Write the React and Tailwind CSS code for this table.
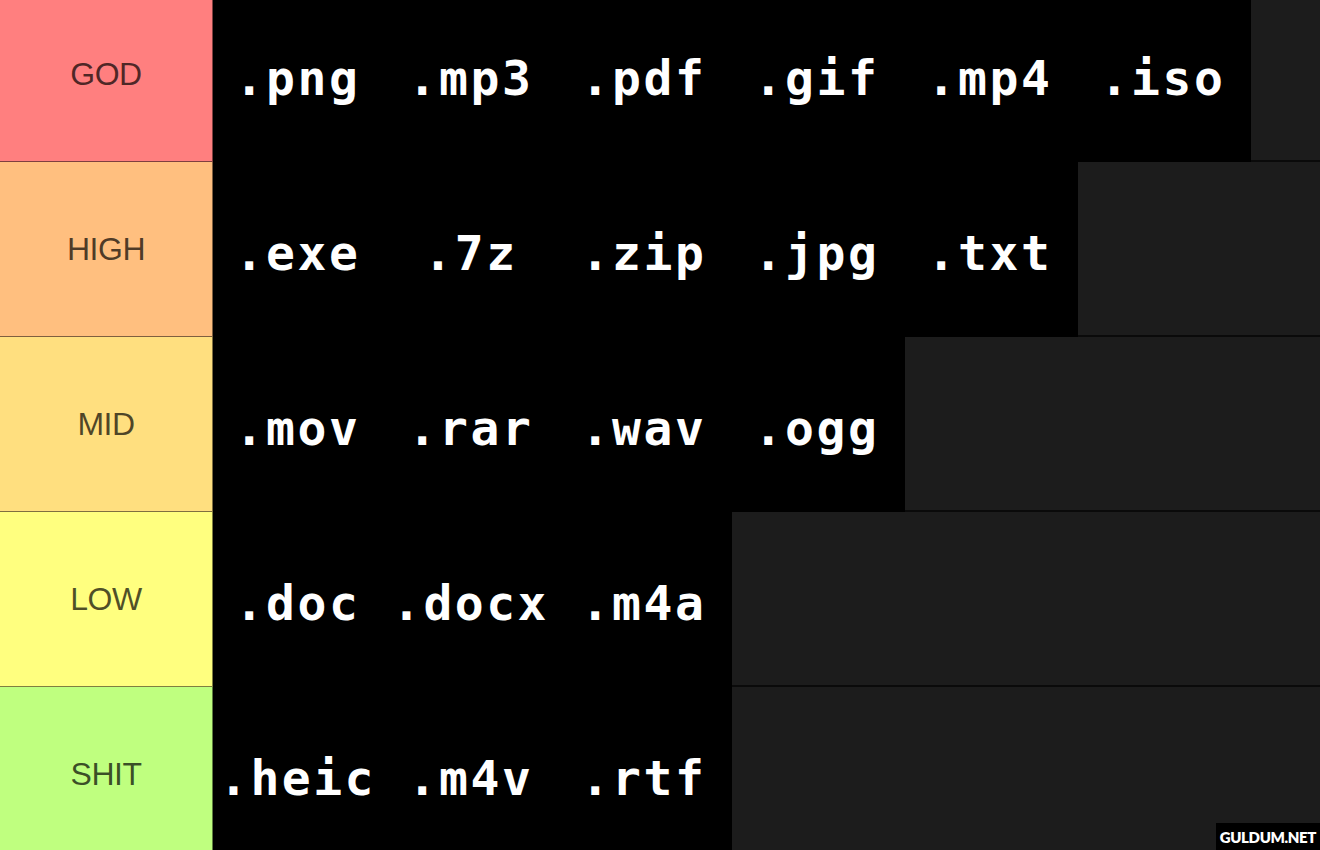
const tiers = [
  { name: 'GOD', bg: 'bg-[#ff7f7f]', items: ['.png', '.mp3', '.pdf', '.gif', '.mp4', '.iso'] },
  { name: 'HIGH', bg: 'bg-[#ffbf7f]', items: ['.exe', '.7z', '.zip', '.jpg', '.txt'] },
  { name: 'MID', bg: 'bg-[#ffdf7f]', items: ['.mov', '.rar', '.wav', '.ogg'] },
  { name: 'LOW', bg: 'bg-[#ffff7f]', items: ['.doc', '.docx', '.m4a'] },
  { name: 'SHIT', bg: 'bg-[#bfff7f]', items: ['.heic', '.m4v', '.rtf'] },
];

const TierRow = ({ tier }) => (
  <div className="flex h-[175px]">
    <div
      className={`w-[213px] shrink-0 flex items-center justify-center border-b border-r border-black/50 ${tier.bg}`}
    >
      <span className="text-[32px] tracking-[-0.5px] text-black/70 font-['Liberation_Sans',Arial,sans-serif]">{tier.name}</span>
    </div>
    <div className="flex bg-black">
      {tier.items.map((item) => (
        <div key={item} className="w-[173px] flex items-center justify-center pt-[7px] pr-[4px]">
          <span className="whitespace-nowrap text-[48px] tracking-[2.5px] font-bold text-white font-['DejaVu_Sans_Mono',monospace]">
            {item}
          </span>
        </div>
      ))}
    </div>
    <div className="flex-1 border-b-2 border-[#0a0a0a]" />
  </div>
);

export default function App() {
  return (
    <div className="relative h-[850px] w-[1320px] overflow-hidden bg-[#1c1c1c]">
      <div className="mt-[-13px] flex flex-col">
        {tiers.map((t) => (
          <TierRow key={t.name} tier={t} />
        ))}
      </div>
      <div className="absolute bottom-0 right-0 bg-black px-[4px] pt-[2px] pb-[1px]">
        <span className="text-[15px] font-extrabold tracking-tight text-white font-['Lato',sans-serif]">GULDUM.NET</span>
      </div>
    </div>
  );
}
